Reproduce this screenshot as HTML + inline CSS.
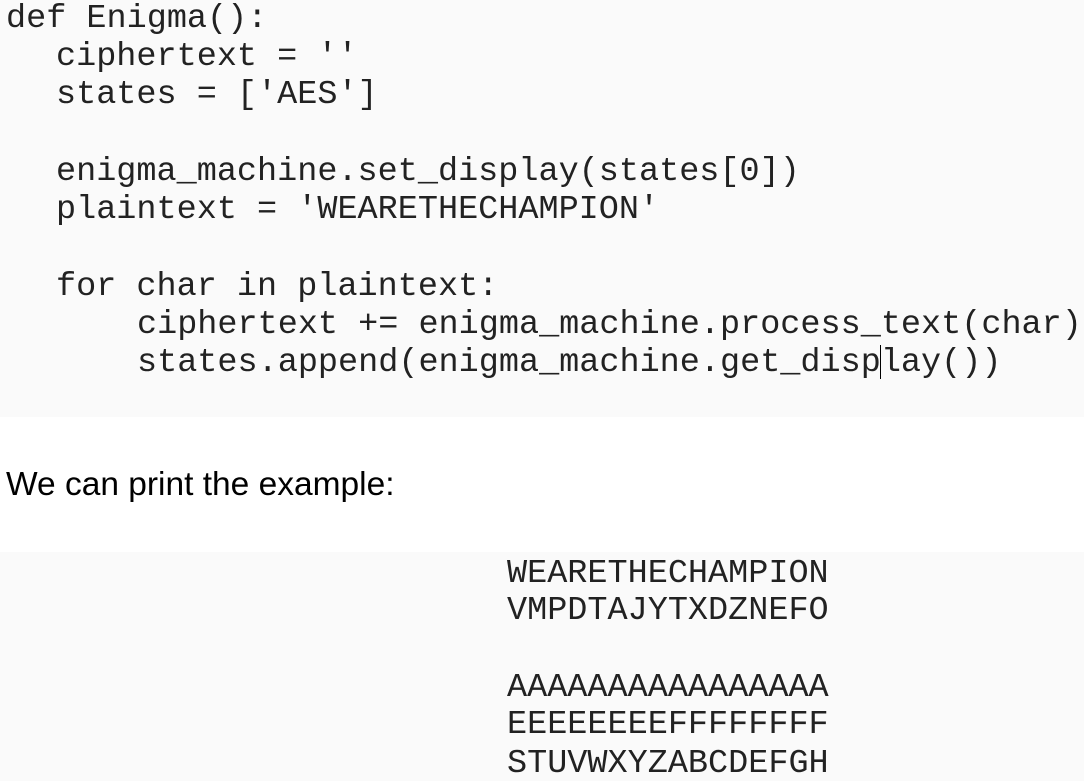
<!DOCTYPE html>
<html><head><meta charset="utf-8"><style>
html,body{margin:0;padding:0;width:1084px;height:781px;overflow:hidden;background:#fff}
.blk{position:absolute;left:0;width:1084px;background:#fafafa}
.l{position:absolute;font-family:"Liberation Mono",monospace;font-size:33.5px;line-height:38px;white-space:pre;color:#222}
.t{position:absolute;left:6px;top:465px;font-family:"Liberation Sans",sans-serif;font-size:33.5px;line-height:40px;color:#000}
</style></head><body>
<div class="blk" style="top:0;height:417px"></div>
<div class="l" style="left:6px;top:0px">def Enigma():</div>
<div class="l" style="left:56px;top:38px">ciphertext = ''</div>
<div class="l" style="left:56px;top:76px">states = ['AES']</div>
<div class="l" style="left:56px;top:153px">enigma_machine.set_display(states[0])</div>
<div class="l" style="left:56px;top:191px">plaintext = 'WEARETHECHAMPION'</div>
<div class="l" style="left:56px;top:268px">for char in plaintext:</div>
<div class="l" style="left:137px;top:306px">ciphertext += enigma_machine.process_text(char)</div>
<div class="l" style="left:137px;top:344px">states.append(enigma_machine.get_display())</div>
<div style="position:absolute;left:880px;top:345px;width:1px;height:34px;background:#000"></div>
<div class="t">We can print the example:</div>
<div class="blk" style="top:552px;height:229px"></div>
<div class="l" style="left:507px;top:555px">WEARETHECHAMPION</div>
<div class="l" style="left:507px;top:592px">VMPDTAJYTXDZNEFO</div>
<div class="l" style="left:507px;top:669px">AAAAAAAAAAAAAAAA</div>
<div class="l" style="left:507px;top:706px">EEEEEEEEFFFFFFFF</div>
<div class="l" style="left:507px;top:745px">STUVWXYZABCDEFGH</div>
</body></html>
